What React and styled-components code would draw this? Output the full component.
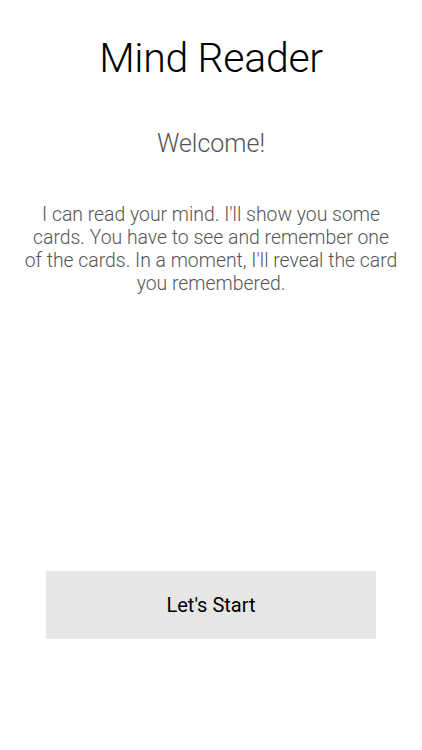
import React from "react";
import styled, { createGlobalStyle } from "styled-components";

const Global = createGlobalStyle`
  html, body { margin: 0; padding: 0; background: #fff; }
  body { font-family: Roboto, "Liberation Sans", Arial, sans-serif; }
`;

const Screen = styled.div`
  width: 422px;
  height: 750px;
  display: flex;
  flex-direction: column;
  align-items: center;
  box-sizing: border-box;
  padding-top: 34px;
`;

const Title = styled.h1`
  margin: 0;
  font-size: 41px;
  line-height: 48px;
  font-weight: 300;
  color: #000;
  letter-spacing: -0.3px;
`;

const Welcome = styled.h2`
  margin: 47px 0 0;
  font-size: 25px;
  line-height: 30px;
  font-weight: 300;
  color: #555;
`;

const Intro = styled.p`
  margin: 44px 0 0;
  padding: 0 22px;
  text-align: center;
  font-size: 19.4px;
  line-height: 23px;
  font-weight: 300;
  color: #555;
`;

const StartButton = styled.button`
  margin-top: auto;
  margin-bottom: 111px;
  width: 330px;
  height: 68px;
  border: none;
  background: #e6e6e6;
  font-family: inherit;
  font-size: 20px;
  font-weight: 400;
  color: #000;
`;

export default function App() {
  return (
    <>
      <Global />
      <Screen>
        <Title>Mind Reader</Title>
        <Welcome>Welcome!</Welcome>
        <Intro>
          I can read your mind. I'll show you some cards. You have to see and
          remember one of the cards. In a moment, I'll reveal the card you
          remembered.
        </Intro>
        <StartButton>Let's Start</StartButton>
      </Screen>
    </>
  );
}
